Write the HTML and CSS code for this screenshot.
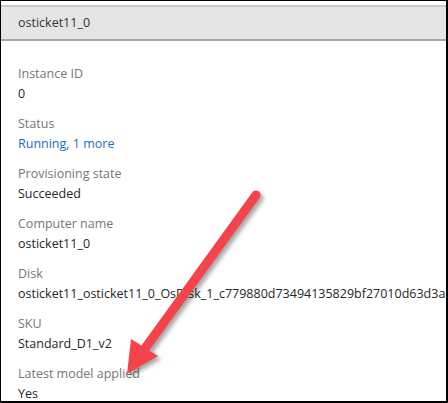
FILE: index.html
```html
<!DOCTYPE html>
<html>
<head>
<meta charset="utf-8">
<link rel="stylesheet" href="styles.css">
</head>
<body>
<div class="frame">
  <div class="header">osticket11_0</div>
  <div class="props">
    <div class="prop"><div class="label">Instance ID</div><div class="value">0</div></div>
    <div class="prop"><div class="label">Status</div><div class="value link">Running, 1 more</div></div>
    <div class="prop"><div class="label">Provisioning state</div><div class="value">Succeeded</div></div>
    <div class="prop"><div class="label">Computer name</div><div class="value">osticket11_0</div></div>
    <div class="prop"><div class="label">Disk</div><div class="value">osticket11_osticket11_0_OsDisk_1_c779880d73494135829bf27010d63d3a</div></div>
    <div class="prop"><div class="label">SKU</div><div class="value">Standard_D1_v2</div></div>
    <div class="prop"><div class="label">Latest model applied</div><div class="value">Yes</div></div>
  </div>
  <svg class="arrow" width="448" height="403" viewBox="0 0 448 403">
    <line x1="256" y1="195" x2="146" y2="347" stroke="#f4434a" stroke-width="9" stroke-linecap="round"/>
    <polygon points="131,339 158,356 127,374" fill="#f4434a"/>
  </svg>
</div>
</body>
</html>
```
FILE: styles.css
```css
html, body {
  margin: 0;
  padding: 0;
  background: #fff;
}
.frame {
  position: relative;
  width: 448px;
  height: 403px;
  box-sizing: border-box;
  border-style: solid;
  border-color: #000;
  border-width: 1px 2px 2px 1px;
  overflow: hidden;
  font-family: "Open Sans", "Noto Sans", sans-serif;
  font-size: 12.5px;
}
.header {
  margin-top: 4px;
  height: 32px;
  line-height: 32px;
  background: #e5e5e5;
  border-top: 2px solid #c8c8c8;
  border-bottom: 2px solid #a8a8a8;
  padding-left: 17px;
  color: #333;
}
.props {
  padding: 23px 0 0 17px;
  display: flex;
  flex-direction: column;
  gap: 10px;
}
.label, .value {
  line-height: 20px;
  white-space: nowrap;
}
.label {
  color: #767676;
}
.value {
  color: #262626;
}
.value.link {
  color: #1570c2;
}
.arrow {
  position: absolute;
  left: -1px;
  top: -1px;
  filter: drop-shadow(3px 3px 2px rgba(0, 0, 0, 0.35));
}
```
